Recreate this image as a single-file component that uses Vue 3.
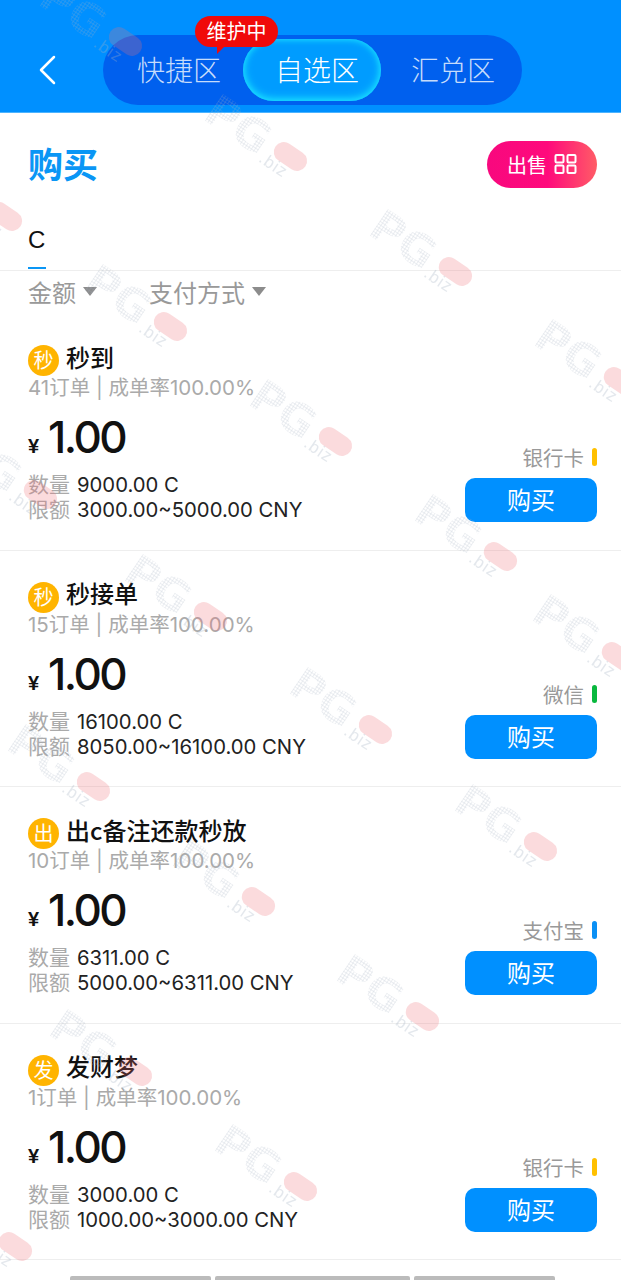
<script setup>
const watermarks = [
  [125, 40], [290, 155], [455, 270], [620, 380], [5, 215], [170, 325], [335, 440], [500, 555],
  [40, 493], [210, 615], [375, 728], [540, 845], [618, 655], [93, 785], [258, 900], [422, 1015],
  [135, 1070], [300, 1185], [15, 1245]
]

const orders = [
  { badge: '秒', name: '秒到', stats: '41订单 | 成单率100.00%', amount: '9000.00 C', limit: '3000.00~5000.00 CNY', pay: '银行卡', color: '#ffc000' },
  { badge: '秒', name: '秒接单', stats: '15订单 | 成单率100.00%', amount: '16100.00 C', limit: '8050.00~16100.00 CNY', pay: '微信', color: '#09b83e' },
  { badge: '出', name: '出c备注还款秒放', stats: '10订单 | 成单率100.00%', amount: '6311.00 C', limit: '5000.00~6311.00 CNY', pay: '支付宝', color: '#0a90f5' },
  { badge: '发', name: '发财梦', stats: '1订单 | 成单率100.00%', amount: '3000.00 C', limit: '1000.00~3000.00 CNY', pay: '银行卡', color: '#ffc000' }
]
</script>

<template>
  <div class="page">
    <header class="top">
      <svg class="back" width="18" height="30" viewBox="0 0 18 30">
        <path d="M16 2 L3 15 L16 28" fill="none" stroke="#fff" stroke-width="2.5" stroke-linecap="round" stroke-linejoin="round" />
      </svg>
      <div class="zones">
        <div class="zone">
          快捷区
          <span class="tip">维护中</span>
        </div>
        <div class="zone active">自选区</div>
        <div class="zone">汇兑区</div>
      </div>
    </header>

    <section class="title-row">
      <h1>购买</h1>
      <button class="sell">
        出售
        <svg width="23" height="20" viewBox="0 0 23 20">
          <g fill="none" stroke="#fff" stroke-width="2">
            <rect x="1.5" y="1" width="8" height="7.5" rx="1" />
            <rect x="13.5" y="1" width="8" height="7.5" rx="1" />
            <rect x="1.5" y="11.5" width="8" height="7.5" rx="1" />
            <rect x="13.5" y="11.5" width="8" height="7.5" rx="1" />
          </g>
        </svg>
      </button>
    </section>

    <div class="coin-tabs">
      <span class="coin">C</span>
    </div>

    <div class="filters">
      <span class="filter">金额<i class="caret"></i></span>
      <span class="filter">支付方式<i class="caret"></i></span>
    </div>

    <div v-for="order in orders" :key="order.name" class="card">
      <div class="card-left">
        <div class="name-row">
          <span class="badge">{{ order.badge }}</span>
          <span class="name">{{ order.name }}</span>
        </div>
        <div class="stats">{{ order.stats }}</div>
        <div class="price"><span class="yen">¥</span><span class="num">1.00</span></div>
        <div class="line"><span class="label">数量</span>{{ order.amount }}</div>
        <div class="line"><span class="label">限额</span>{{ order.limit }}</div>
      </div>
      <div class="card-right">
        <div class="pay">
          {{ order.pay }}
          <i class="pay-bar" :style="{ background: order.color }"></i>
        </div>
        <button class="buy">购买</button>
      </div>
    </div>

    <div class="home-bars">
      <span class="bar-a"></span>
      <span class="bar-b"></span>
      <span class="bar-a"></span>
    </div>

    <!-- watermark over the whole page -->
    <div class="marks">
      <div
        v-for="(m, i) in watermarks"
        :key="i"
        class="mark"
        :style="{ left: m[0] - 88 + 'px', top: m[1] - 35 + 'px' }"
      >
        <span class="mark-text">PG</span>
        <span class="mark-pill"></span>
        <span class="mark-biz">.biz</span>
      </div>
    </div>
  </div>
</template>

<style scoped>
.page {
  position: relative;
  width: 621px;
  height: 1280px;
  overflow: hidden;
  background: #fff;
  font-family: "Noto Sans CJK SC", "Liberation Sans", sans-serif;
}

.top {
  display: flex;
  align-items: center;
  height: 113px;
  background: #0090ff;
  padding-left: 38px;
  box-sizing: border-box;
  border-bottom: 1px solid #4db4ff;
}

.back {
  margin-top: 28px;
  flex: none;
}

.zones {
  display: flex;
  align-items: center;
  box-sizing: border-box;
  width: 419px;
  height: 70px;
  margin: 28px 0 0 47px;
  padding-left: 2px;
  border-radius: 35px;
  background: #0060ee;
}

.zone {
  position: relative;
  width: 138px;
  height: 62px;
  line-height: 60px;
  padding-left: 10px;
  box-sizing: border-box;
  text-align: center;
  font-size: 28px;
  font-weight: 300;
  color: #c6dcfb;
  border-radius: 31px;
}

.zone:last-child {
  padding-left: 6px;
}

.zone.active {
  color: #fff;
  background: #009cff;
  box-shadow: inset 0 -2px 10px #18dcff, inset 0 0 6px #18dcff;
}

.tip {
  position: absolute;
  left: 90px;
  top: -23px;
  width: 83px;
  height: 31px;
  line-height: 30px;
  padding: 0;
  text-align: center;
  font-size: 20px;
  font-weight: 400;
  color: #fff;
  background: #f00a0a;
  border-radius: 16px;
  z-index: 2;
}

.tip::after {
  content: "";
  position: absolute;
  left: 22px;
  top: 29px;
  border-style: solid;
  border-width: 9px 9px 0 0;
  border-color: #f00a0a transparent transparent transparent;
}

.title-row {
  display: flex;
  justify-content: space-between;
  align-items: center;
  height: 102px;
  padding: 0 24px 0 28px;
  box-sizing: border-box;
}

h1 {
  margin: 0 0 4px;
  font-size: 35px;
  font-weight: 700;
  color: #0a96f5;
}

.sell {
  display: flex;
  align-items: center;
  justify-content: center;
  gap: 7px;
  width: 110px;
  height: 47px;
  padding: 0;
  border: none;
  border-radius: 24px;
  font-family: inherit;
  font-size: 20px;
  color: #fff;
  background: linear-gradient(90deg, #f8087e 0%, #ff0a7c 55%, #ff5c66 100%);
}

.coin-tabs {
  height: 55px;
  padding-left: 28px;
  border-bottom: 1px solid #eee;
}

.coin {
  display: inline-block;
  box-sizing: border-box;
  width: 18px;
  height: 54px;
  line-height: 50px;
  font-family: "Liberation Sans", sans-serif;
  font-size: 24px;
  color: #111;
  border-bottom: 2px solid #0a96f5;
}

.filters {
  display: flex;
  gap: 52px;
  height: 43px;
  padding: 0 0 2px 28px;
  box-sizing: border-box;
  align-items: center;
  font-size: 24px;
  color: #999;
}

.filter {
  display: flex;
  align-items: center;
  gap: 7px;
}

.caret {
  border-style: solid;
  border-width: 9px 7px 0 7px;
  border-color: #8c8c8c transparent transparent transparent;
}

.card {
  display: flex;
  justify-content: space-between;
  align-items: flex-end;
  height: 236.5px;
  box-sizing: border-box;
  padding: 29px 24px 27.5px 28px;
  border-bottom: 1px solid #eee;
}

.name-row {
  display: flex;
  align-items: center;
  gap: 7px;
  height: 31px;
}

.badge {
  width: 31px;
  height: 31px;
  line-height: 29px;
  border-radius: 50%;
  text-align: center;
  font-size: 20px;
  color: #fff;
  background: #ffb400;
}

.name {
  padding-bottom: 8px;
  font-size: 24px;
  font-weight: 500;
  line-height: 26px;
  color: #111;
}

.stats {
  height: 25px;
  line-height: 23px;
  margin-bottom: 1px;
  font-family: Inter, "Noto Sans CJK SC", sans-serif;
  font-size: 20.5px;
  color: #aaa;
}

.price {
  display: flex;
  align-items: baseline;
  height: 55px;
  line-height: 51px;
  margin: 11px 0 5px;
  color: #111;
}

.yen {
  width: 20px;
  font-family: "Liberation Sans", sans-serif;
  font-size: 20px;
  font-weight: 700;
}

.num {
  font-family: Inter, sans-serif;
  font-size: 44px;
  font-weight: 500;
  letter-spacing: -2.5px;
}

.line {
  height: 25px;
  line-height: 25px;
  font-family: Inter, "Noto Sans CJK SC", sans-serif;
  font-size: 20.3px;
  color: #222;
}

.label {
  display: inline-block;
  width: 49px;
  font-size: 21px;
  color: #aaa;
}

.card-right {
  display: flex;
  flex-direction: column;
  align-items: flex-end;
}

.pay {
  display: flex;
  align-items: center;
  gap: 8px;
  height: 28px;
  margin-bottom: 7px;
  font-size: 20.5px;
  color: #999;
}

.pay-bar {
  width: 5px;
  height: 18px;
  border-radius: 3px;
}

.buy {
  width: 132px;
  height: 44px;
  padding: 0 0 3px;
  border: none;
  border-radius: 10px;
  font-family: inherit;
  font-size: 24px;
  color: #fff;
  background: #0090ff;
}

.home-bars {
  display: flex;
  justify-content: center;
  gap: 4px;
  padding: 16px 0 0 4px;
}

.home-bars span {
  height: 8px;
  background: #bbb;
  border-radius: 2px 2px 0 0;
}

.bar-a {
  width: 141px;
}

.bar-b {
  width: 195px;
}

.marks {
  position: absolute;
  inset: 0;
  pointer-events: none;
}

.mark {
  position: absolute;
  display: flex;
  align-items: center;
  width: 113px;
  height: 30px;
  transform: rotate(34deg);
}

.mark-text {
  margin-top: 6px;
  font-family: "DejaVu Sans", sans-serif;
  font-size: 44px;
  font-weight: 700;
  line-height: 44px;
  color: transparent;
  background-image: radial-gradient(circle, rgba(165, 178, 195, 0.32) 0.9px, transparent 1.2px);
  background-size: 3px 3px;
  -webkit-background-clip: text;
  background-clip: text;
}

.mark-pill {
  position: absolute;
  right: 0;
  top: 5px;
  width: 36px;
  height: 20px;
  border-radius: 10px;
  background: rgba(240, 110, 120, 0.25);
  mix-blend-mode: multiply;
}

.mark-biz {
  position: absolute;
  right: 12px;
  top: 22px;
  font-family: "Liberation Sans", sans-serif;
  font-size: 17px;
  letter-spacing: 1px;
  color: rgba(165, 178, 195, 0.3);
}
</style>

<style>
html,
body {
  margin: 0;
  background: #fff;
}
</style>
